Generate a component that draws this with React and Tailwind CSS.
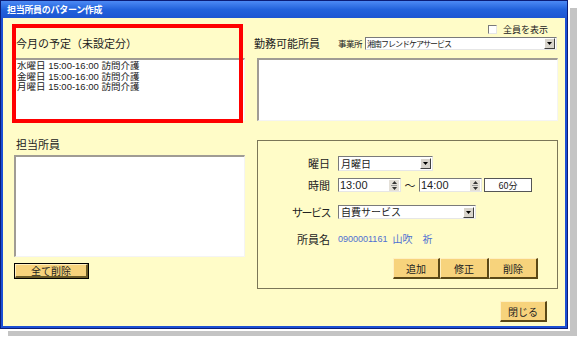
import React from "react";

function Arrow() {
  return (
    <div className="w-[11px] h-[11px] bg-[#d8d4cc] border border-t-[#ffffff] border-l-[#ffffff] border-r-[#404040] border-b-[#404040] flex items-center justify-center mr-[1px]">
      <svg width="5" height="3" viewBox="0 0 5 3"><path d="M0 0H5L2.5 3Z" fill="#000" /></svg>
    </div>
  );
}

function Spin() {
  return (
    <div className="w-[10px] h-[11px] bg-[#e4e0d8] flex flex-col items-center justify-center gap-[1px] mr-[1px]">
      <svg width="5" height="3" viewBox="0 0 5 3"><path d="M0 3H5L2.5 0Z" fill="#333" /></svg>
      <div className="w-[6px] h-px bg-[#999]" />
      <svg width="5" height="3" viewBox="0 0 5 3"><path d="M0 0H5L2.5 3Z" fill="#333" /></svg>
    </div>
  );
}

const sunken =
  "bg-white border-t-2 border-l-2 border-r border-b border-t-[#a09c94] border-l-[#a09c94] border-r-[#f4f4f4] border-b-[#f4f4f4]";

const field =
  "bg-white border border-t-[#7a7a7a] border-l-[#7a7a7a] border-r-[#e6e6e6] border-b-[#e6e6e6]";

const goldBtn =
  "flex items-center justify-center bg-[#f7d37c] border-t border-l border-r-2 border-b-2 border-t-[#fff0c0] border-l-[#fff0c0] border-r-[#5a4816] border-b-[#5a4816] text-[10px] text-[#222]";

export default function App() {
  return (
    <div className="relative w-[577px] h-[339px] bg-white overflow-hidden font-['Noto_Sans_CJK_JP','Noto_Sans',sans-serif] text-[#222]">
      {/* drop shadow */}
      <div className="absolute left-[8px] top-[8px] w-[569px] h-[328px] bg-[#c4c4c4]" />
      <div className="relative w-[570px] h-[331px] bg-white">
        <div className="w-[568px] h-[329px] flex flex-col bg-[#1b4fd4] border border-[#0b1d78]">
          {/* title bar */}
          <div className="h-[17px] flex items-center pl-[6px] bg-gradient-to-b from-[#4c8af5] via-[#2262dc] to-[#1d55d2]">
            <span className="text-white font-bold text-[9px] tracking-[-0.3px] leading-none">担当所員のパターン作成</span>
          </div>
          {/* body */}
          <div className="flex-1 mx-[2px] mb-[2px] bg-[#fffcc8] flex pt-[6px] pl-[11px]">
            {/* left column */}
            <div className="w-[231px] flex flex-col">
              <div className="h-[12px]" />
              <div className="h-[14px] leading-[14px] text-[11px] pl-[2px]">今月の予定（未設定分）</div>
              <div className={`mt-[8px] h-[63px] ${sunken} pl-[1px] pt-[1px] text-[9.5px] leading-[10.5px] font-['Liberation_Sans','Noto_Sans_CJK_JP',sans-serif]`}>
                <div>水曜日 15:00-16:00 訪問介護</div>
                <div>金曜日 15:00-16:00 訪問介護</div>
                <div>月曜日 15:00-16:00 訪問介護</div>
              </div>
              <div className="mt-[16px] h-[14px] leading-[14px] text-[11px] pl-[2px]">担当所員</div>
              <div className={`mt-[4px] h-[102px] ${sunken}`} />
              <div className="mt-[6px] w-[75px] h-[16px] border border-black bg-[#f7d37c] flex">
                <div className="flex-1 flex items-center justify-center border-t border-l border-r-2 border-b-2 border-t-[#fff0c0] border-l-[#fff0c0] border-r-[#6a5a26] border-b-[#6a5a26] text-[10px] leading-none">全て削除</div>
              </div>
            </div>

            {/* right column */}
            <div className="w-[301px] ml-[12px] flex flex-col">
              <div className="h-[10px] flex items-center justify-end pr-[10px] gap-[6px]">
                <div className={`w-[9px] h-[9px] ${field}`} />
                <span className="text-[9px] leading-none">全員を表示</span>
              </div>
              <div className="mt-[3px] h-[13px] flex items-center -ml-[3px]">
                <span className="w-[84px] text-[11px] leading-none whitespace-nowrap">勤務可能所員</span>
                <span className="w-[27px] text-[8.5px] leading-none tracking-[-0.5px] whitespace-nowrap">事業所</span>
                <div className={`w-[192px] h-[13px] ${field} flex items-center`}>
                  <span className="flex-1 text-[8px] leading-none pl-[1px] tracking-[-1px] whitespace-nowrap">湘南フレンドケアサービス</span>
                  <Arrow />
                </div>
              </div>
              <div className={`mt-[8px] h-[63px] ${sunken}`} />

              {/* group box */}
              <div className="mt-[19px] h-[149px] border border-[#7b7658] flex flex-col pt-[15px]">
                <div className="grid grid-cols-[72px_1fr] gap-x-[8px] items-center">
                  <span className="text-[11px] leading-none text-right">曜日</span>
                  <div className={`w-[95px] h-[15px] ${field} flex items-center`}>
                    <span className="flex-1 text-[10px] leading-none pl-[2px]">月曜日</span>
                    <Arrow />
                  </div>
                </div>
                <div className="mt-[7px] grid grid-cols-[72px_1fr] gap-x-[8px] items-center">
                  <span className="text-[11px] leading-none text-right">時間</span>
                  <div className="flex items-center">
                    <div className={`w-[63px] h-[14px] ${field} flex items-center`}>
                      <span className="flex-1 text-[11px] leading-none font-['Liberation_Sans',sans-serif] pl-[1px]">13:00</span>
                      <Spin />
                    </div>
                    <span className="w-[18px] text-center text-[11px] leading-none">～</span>
                    <div className={`w-[63px] h-[14px] ${field} flex items-center`}>
                      <span className="flex-1 text-[11px] leading-none font-['Liberation_Sans',sans-serif] pl-[1px]">14:00</span>
                      <Spin />
                    </div>
                    <div className="ml-[2px] w-[48px] h-[14px] bg-white border border-[#555] flex items-center justify-center text-[9px] leading-none">60分</div>
                  </div>
                </div>
                <div className="mt-[13px] grid grid-cols-[72px_1fr] gap-x-[8px] items-center">
                  <span className="text-[11px] leading-none text-right tracking-[-1.5px]">サービス</span>
                  <div className={`w-[138px] h-[14px] ${field} flex items-center`}>
                    <span className="flex-1 text-[10px] leading-none pl-[2px]">自費サービス</span>
                    <Arrow />
                  </div>
                </div>
                <div className="mt-[13px] h-[14px] grid grid-cols-[72px_1fr] gap-x-[8px] items-center">
                  <span className="text-[11px] leading-none text-right">所員名</span>
                  <div className="flex items-center gap-[5px] text-[10px] leading-none text-[#4d6fd2] whitespace-nowrap">
                    <span className="text-[9px] font-['Liberation_Sans',sans-serif]">0900001161</span>
                    <span>山吹　祈</span>
                  </div>
                </div>
                <div className="mt-[12px] flex justify-end pr-[19px]">
                  <div className={`w-[47px] h-[21px] ${goldBtn}`}>追加</div>
                  <div className={`w-[49px] h-[21px] ${goldBtn}`}>修正</div>
                  <div className={`w-[49px] h-[21px] ${goldBtn}`}>削除</div>
                </div>
              </div>

              <div className="mt-[12px] flex justify-end pr-[11px]">
                <div className={`w-[47px] h-[21px] ${goldBtn}`}>閉じる</div>
              </div>
            </div>
          </div>
        </div>
      </div>
      {/* red annotation */}
      <div className="absolute left-[12px] top-[24px] w-[231px] h-[99px] border-4 border-[#ff0000]" />
    </div>
  );
}
